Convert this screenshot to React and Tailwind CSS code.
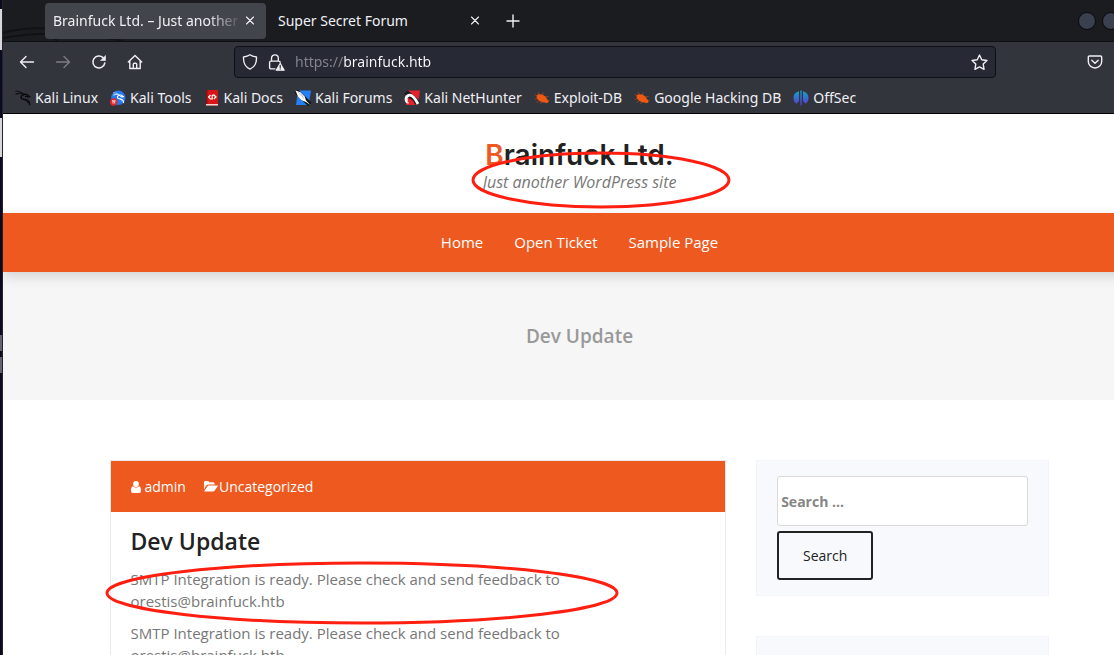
import React from "react";

const stroke = {
  fill: "none",
  stroke: "currentColor",
  strokeLinecap: "round",
  strokeLinejoin: "round",
};

function Icon({ children, className = "size-4", width = 1.3 }) {
  return (
    <svg viewBox="0 0 16 16" className={className} strokeWidth={width} {...stroke} aria-hidden="true">
      {children}
    </svg>
  );
}

const CloseIcon = () => (
  <Icon className="size-4" width={1.1}>
    <path d="M4.500 4l7 7M11.500 4l-7 7" />
  </Icon>
);

function Dragon({ color, transform }) {
  return (
    <g fill="none" stroke={color} strokeLinecap="round" strokeLinejoin="round" transform={transform}>
      <path d="M.8 1.2C3.5 1 6.500 1.700 8.800 4.200" strokeWidth=".8" />
      <path d="M1 4.200C3.800 2.900 7 3 9 4.600" strokeWidth="1.100" />
      <path d="M9 4.300c1.600-.3 3.200.2 4.400 1.500l1.500.8-1.700.3-2.700-.5" strokeWidth="1.400" />
      <path d="M8.700 4.800C5.500 5.200 5.300 8.400 7.700 9.100c2.700.7 5 .7 6 2.300.7 1.200.9 2.200 1 3.400" strokeWidth="1.500" />
      <path d="M10 9.500c1.600.9 2.400 2 2.600 3.200" strokeWidth=".8" />
    </g>
  );
}

const Bug = () => (
  <g>
    <g stroke="#a8481a" strokeWidth=".8" fill="none">
      <path d="M4 6L.8 4.500M5.500 5L4 2M8.500 5.500l.5-3M11 7l3.500-.5M4 8L.8 9.500M6 10l-3.500 2.500M9 11.500l-3 2M13 11l2.500-.5" />
    </g>
    <ellipse cx="7.800" cy="8.300" rx="5.700" ry="3.500" fill="#ee5a13" transform="rotate(30 7.800 8.300)" />
    <circle cx="12.500" cy="11.200" r="1.900" fill="#ee5a13" />
  </g>
);

const bookmarks = [
  { name: "Kali Linux", art: <Dragon color="#08090b" /> },
  {
    name: "Kali Tools",
    art: (
      <g>
        <circle cx="8.300" cy="7.800" r="7.200" fill="#2878f0" />
        <Dragon color="#fff" transform="translate(3 2) scale(.72)" />
        <circle cx="3.700" cy="12" r="3.700" fill="#e2262c" />
        <path d="M2 10.800h3.600M3 10.800v2.800M4.700 10.800v2.800" stroke="#fff" strokeWidth=".8" />
      </g>
    ),
  },
  {
    name: "Kali Docs",
    art: (
      <g>
        <path d="M2 0h12v15.500H2z" fill="#d81416" />
        <path d="M2 0h1.500v15H2z" fill="#8e0d10" />
        <path d="M2 14h12v1.500H2z" fill="#f2d5d5" />
        <path d="M6.500 5L4.600 7l1.900 2h1.700V5.500L10 5l2 2-2.200 2" fill="none" stroke="#fff" strokeWidth="1.200" />
      </g>
    ),
  },
  {
    name: "Kali Forums",
    art: (
      <g>
        <path d="M3 .5h13l-2.300 14.500H1z" fill="#2380f4" />
        <path d="M1 1l14 13.500" stroke="#15171c" strokeWidth="5" />
        <path d="M.5.5l5 1.800 4.200 4.200 1.300 4L15.500 15l-5-3.300-4-1.400L3 6.500z" fill="#fff" />
        <path d="M3 2l5 5.500M6 3.500L9 9" stroke="#9cabb9" strokeWidth=".6" />
      </g>
    ),
  },
  {
    name: "Kali NetHunter",
    art: (
      <g>
        <path d="M4 .5h12l-2 14.500H2z" fill="#e3222c" />
        <path d="M0 3.500L4 .5l11.500 10V14L12 15z" fill="#1c1d22" />
        <path d="M14 14C11 8 8 4.500 4.700 5.300 1.300 6.300 1 11.500 4.800 12.500" fill="none" stroke="#fff" strokeWidth="2.800" />
        <path d="M4.500 12.300C4 9.500 7 8.500 9.500 13.500" fill="none" stroke="#e3222c" strokeWidth="1.800" />
      </g>
    ),
  },
  { name: "Exploit-DB", art: <Bug /> },
  { name: "Google Hacking DB", art: <Bug /> },
  {
    name: "OffSec",
    art: (
      <g>
        <defs>
          <linearGradient id="offsec" x1="0" y1="0" x2="0" y2="1" gradientUnits="objectBoundingBox">
            <stop offset="0" stopColor="#16a5c8" />
            <stop offset="1" stopColor="#5a35d6" />
          </linearGradient>
        </defs>
        <path d="M6 1.200C2.500 2 .5 4.500.5 7.800c0 2.800 1.200 4.900 3 6L6 11zM7.300.5h1.400v15H7.300zM10 1.200c3.500.8 5.500 3.300 5.500 6.600 0 2.800-1.200 4.900-3 6L10 11z" fill="url(#offsec)" />
      </g>
    ),
  },
];

function TabStrip() {
  return (
    <div className="relative flex h-[42px] items-center overflow-hidden border-b border-[#0e0f12] bg-[#1b1c20] pr-3 pl-[42px]">
      <svg className="absolute bottom-0 left-0 h-4 w-32" viewBox="0 0 128 16" fill="none" stroke="#111216" strokeWidth="2" aria-hidden="true">
        <path d="M0 8C20 2 45 2 60 6M0 13c35-7 80-5 120 3M45 10l10 6" />
      </svg>
      <div className="relative flex h-9 w-[221px] items-center rounded bg-[#43454c] px-2">
        <span className="min-w-0 flex-1 overflow-hidden whitespace-nowrap [mask-image:linear-gradient(to_right,#000_155px,transparent_189px)]">
          Brainfuck Ltd. – Just another W
        </span>
        <button type="button" aria-label="Close tab"><CloseIcon /></button>
      </div>
      <div className="flex h-9 w-[225px] items-center pr-2 pl-3">
        <span className="flex-1">Super Secret Forum</span>
        <button type="button" aria-label="Close tab"><CloseIcon /></button>
      </div>
      <button type="button" aria-label="New tab" className="ml-3.5">
        <Icon className="size-4" width={1.4}><path d="M8 2v12M2 8h12" /></Icon>
      </button>
      <div className="ml-auto flex gap-1.5">
        {["Minimise", "Maximise", "Close"].map((label) => (
          <button key={label} type="button" aria-label={label} className="size-[18px] rounded-full border border-[#08090b] bg-[#3a404e]" />
        ))}
      </div>
    </div>
  );
}

function Toolbar() {
  return (
    <div className="flex h-10 items-center bg-[#33353d] pr-[53px] pl-4">
      <div className="flex gap-5">
        <button type="button" aria-label="Back">
          <Icon width={1.4}><path d="M1.500 8h13M7 2.500L1.500 8 7 13.500" /></Icon>
        </button>
        <button type="button" aria-label="Forward" className="text-[#7c7d83]">
          <Icon width={1.400}><path d="M1.500 8h13M9 2.500L14.500 8 9 13.500" /></Icon>
        </button>
        <button type="button" aria-label="Reload">
          <Icon width={1.500}>
            <path d="M13.800 9A6 6 0 1 1 12 3.600" />
            <path d="M14.500 1.800v4.700H9.800z" fill="currentColor" strokeWidth=".6" />
          </Icon>
        </button>
        <button type="button" aria-label="Home">
          <Icon width={1.400}>
            <path d="M1.300 8L8 1.500 14.700 8M2.800 7v7.500h10.400V7M6.300 14.500V10.200c0-.6.4-1 1-1h1.400c.6 0 1 .4 1 1v4.300" />
          </Icon>
        </button>
      </div>
      <div className="ml-[91px] flex h-8 flex-1 items-center gap-2.5 rounded border border-[#0e0f12] bg-[#272934] px-[7px]">
        <Icon className="size-4" width={1.300}>
          <path d="M8 .8c2 1.400 4 1.900 6.500 2.200.3 6-1.900 10.200-6.500 12.200C3.400 13.200 1.200 9 1.500 3 4 2.700 6 2.200 8 .8z" />
        </Icon>
        <Icon className="size-[17px]" width={1.300}>
          <path d="M6.500 14H2.800c-.7 0-1.300-.6-1.300-1.300V8c0-.7.6-1.300 1.300-1.300h7.400c.7 0 1.200.4 1.300 1M3.300 6.500V4a3.200 3.200 0 0 1 6.400 0v2.500" />
          <path d="M11.500 8.700l3.800 6.500H7.700z" fill="currentColor" strokeWidth="1" />
          <path d="M11.500 10.700v2M11.500 14v.2" stroke="#272934" strokeWidth="1.100" />
        </Icon>
        <input
          aria-label="Address"
          defaultValue="https://brainfuck.htb"
          className="min-w-0 flex-1 bg-[linear-gradient(to_right,#85868f_49px,#fbfbfe_49px)] bg-clip-text text-transparent outline-none"
        />
        <button type="button" aria-label="Bookmark this page">
          <Icon className="size-[17px]" width={1.300}>
            <path d="M8 1l2.100 4.400 4.900.7-3.500 3.400.8 4.900L8 12.100l-4.300 2.300.8-4.900L1 6.100l4.900-.7z" />
          </Icon>
        </button>
      </div>
      <button type="button" aria-label="Save to Pocket" className="ml-[91px]">
        <Icon width={1.400}>
          <path d="M2.500 2h11c.7 0 1.200.5 1.200 1.200V7.500a6.700 6.500 0 0 1-13.400 0V3.200C1.300 2.500 1.800 2 2.500 2z" />
          <path d="M4.800 6.300L8 9.300l3.200-3" />
        </Icon>
      </button>
    </div>
  );
}

function Bookmarks() {
  return (
    <nav aria-label="Bookmarks" className="flex h-8 items-center gap-3 border-b border-black bg-[#33353d] pl-3">
      {bookmarks.map((b) => (
        <a key={b.name} href="#" className="flex shrink-0 items-center gap-1 whitespace-nowrap">
          <svg viewBox="0 0 16 16" className="size-4" aria-hidden="true">{b.art}</svg>
          {b.name}
        </a>
      ))}
    </nav>
  );
}

function Message() {
  return (
    <p className="mb-2.5 max-w-[450px]">
      SMTP Integration is ready. Please check and send feedback to orestis@brainfuck.htb
    </p>
  );
}

function Site() {
  return (
    <div className="flex-1 bg-white font-['Open_Sans',sans-serif] text-[15px] leading-[22px] text-[#777]">
      <header className="flex justify-center pt-[25px] pb-5">
        <div className="relative text-center">
          <h1 className="font-['Inter',sans-serif] text-[28px] leading-8 font-semibold text-[#222]">
            <span className="text-[#ee591f]">B</span>rainfuck Ltd.
          </h1>
          <p className="text-base leading-[22px] italic">Just another WordPress site</p>
          <svg className="absolute top-3 -left-3 h-[58px] w-[260px]" viewBox="0 0 260 58" fill="none" aria-hidden="true">
            <ellipse cx="130" cy="29" rx="128" ry="27" stroke="#ff1f10" strokeWidth="3" />
          </svg>
        </div>
      </header>

      <nav aria-label="Main" className="relative flex h-[59px] items-center justify-center gap-[31px] bg-[#ee591f] pb-0.5 text-white shadow-[0_4px_12px_rgba(0,0,0,0.15)]">
        <a href="#">Home</a>
        <a href="#">Open Ticket</a>
        <a href="#">Sample Page</a>
      </nav>

      <div className="flex h-32 items-center justify-center bg-[#f6f6f6]">
        <h2 className="text-[19px] font-semibold text-[#999]">Dev Update</h2>
      </div>

      <main className="mx-auto flex max-w-[970px] pt-[60px]">
        <div className="w-2/3 px-[15px]">
          <article className="border border-[#e9e9ec]">
            <div className="flex h-[51px] items-center gap-[18px] bg-[#ee591f] px-5 text-sm text-white">
              <a href="#" className="flex items-center gap-1">
                <svg viewBox="0 0 10 12" className="h-3 w-2.5" fill="currentColor" aria-hidden="true">
                  <circle cx="5" cy="3" r="2.900" />
                  <path d="M2 5.300C.5 5.800 0 7.500 0 9.800 0 11.200.8 12 2 12h6c1.200 0 2-.8 2-2.200 0-2.300-.5-4-2-4.500-1.500 1.600-4.500 1.600-6 0z" />
                </svg>
                admin
              </a>
              <a href="#" className="flex items-center gap-px">
                <svg viewBox="0 0 14 11" className="h-[11px] w-3.5" fill="currentColor" aria-hidden="true">
                  <path d="M0 8.500V1.300C0 .6.500 0 1.200 0h2.600C4.500 0 5 .5 5 1.200h4.300c.7 0 1.300.6 1.300 1.300v1.100H4.500c-1 0-1.800.4-2.500 1.200z" />
                  <path d="M4.500 4.500h9c.5 0 .6.400.3.800l-3 4.200c-.5.600-1.200 1-2 1H.8c-.6 0-.7-.3-.4-.8l3-4.300c.3-.5.600-.9 1.100-.9z" />
                </svg>
                Uncategorized
              </a>
            </div>
            <div className="px-5 pt-3.5">
              <h2 className="text-[23px] leading-[30px] font-semibold text-[#222]">Dev Update</h2>
              <div className="relative pt-3">
                <Message />
                <Message />
                <svg className="absolute top-[5px] -left-[26px] h-[64px] w-[514px]" viewBox="0 0 514 64" fill="none" aria-hidden="true">
                  <ellipse cx="257" cy="32" rx="255" ry="30" stroke="#ff1f10" strokeWidth="3" />
                </svg>
              </div>
            </div>
          </article>
        </div>

        <aside className="flex w-1/3 flex-col gap-10 px-[15px]">
          <form className="flex flex-col items-start gap-[5px] border border-[#f3f4f7] bg-[#f8f9fd] px-5 py-[15px]" onSubmit={(e) => e.preventDefault()}>
            <input
              type="search"
              aria-label="Search"
              placeholder="Search ..."
              className="h-[50px] w-full rounded-[3px] border border-[#d9d9d9] bg-white px-[3px] text-sm font-bold outline-none placeholder:text-[#858585]"
            />
            <button type="submit" className="h-[49px] w-24 rounded-[3px] border-2 border-[#222] text-sm text-[#222]">
              Search
            </button>
          </form>
          <section aria-label="Recent posts" className="h-40 border border-[#f3f4f7] bg-[#f8f9fd]" />
        </aside>
      </main>
    </div>
  );
}

export default function App() {
  return (
    <div className="flex h-screen overflow-hidden">
      <div className="w-[3px] shrink-0 border-r border-[#23242e] bg-[linear-gradient(#0a0b20_9px,#d8d8dc_9px,#d8d8dc_50px,#0a0b20_50px,#0a0b20_118px,#d8d8dc_118px,#d8d8dc_157px,#0a0b20_157px,#0a0b20_335px,#62646e_335px,#62646e_351px,#0a0b20_351px,#0a0b20_357px,#62646e_357px,#62646e_373px,#0a0b20_373px)]" />
      <div className="-mr-[42px] flex min-w-0 flex-1 flex-col">
        <div className="shrink-0 font-['Noto_Sans',sans-serif] text-sm text-[#f0f0f4]">
          <TabStrip />
          <Toolbar />
          <Bookmarks />
        </div>
        <Site />
      </div>
    </div>
  );
}
